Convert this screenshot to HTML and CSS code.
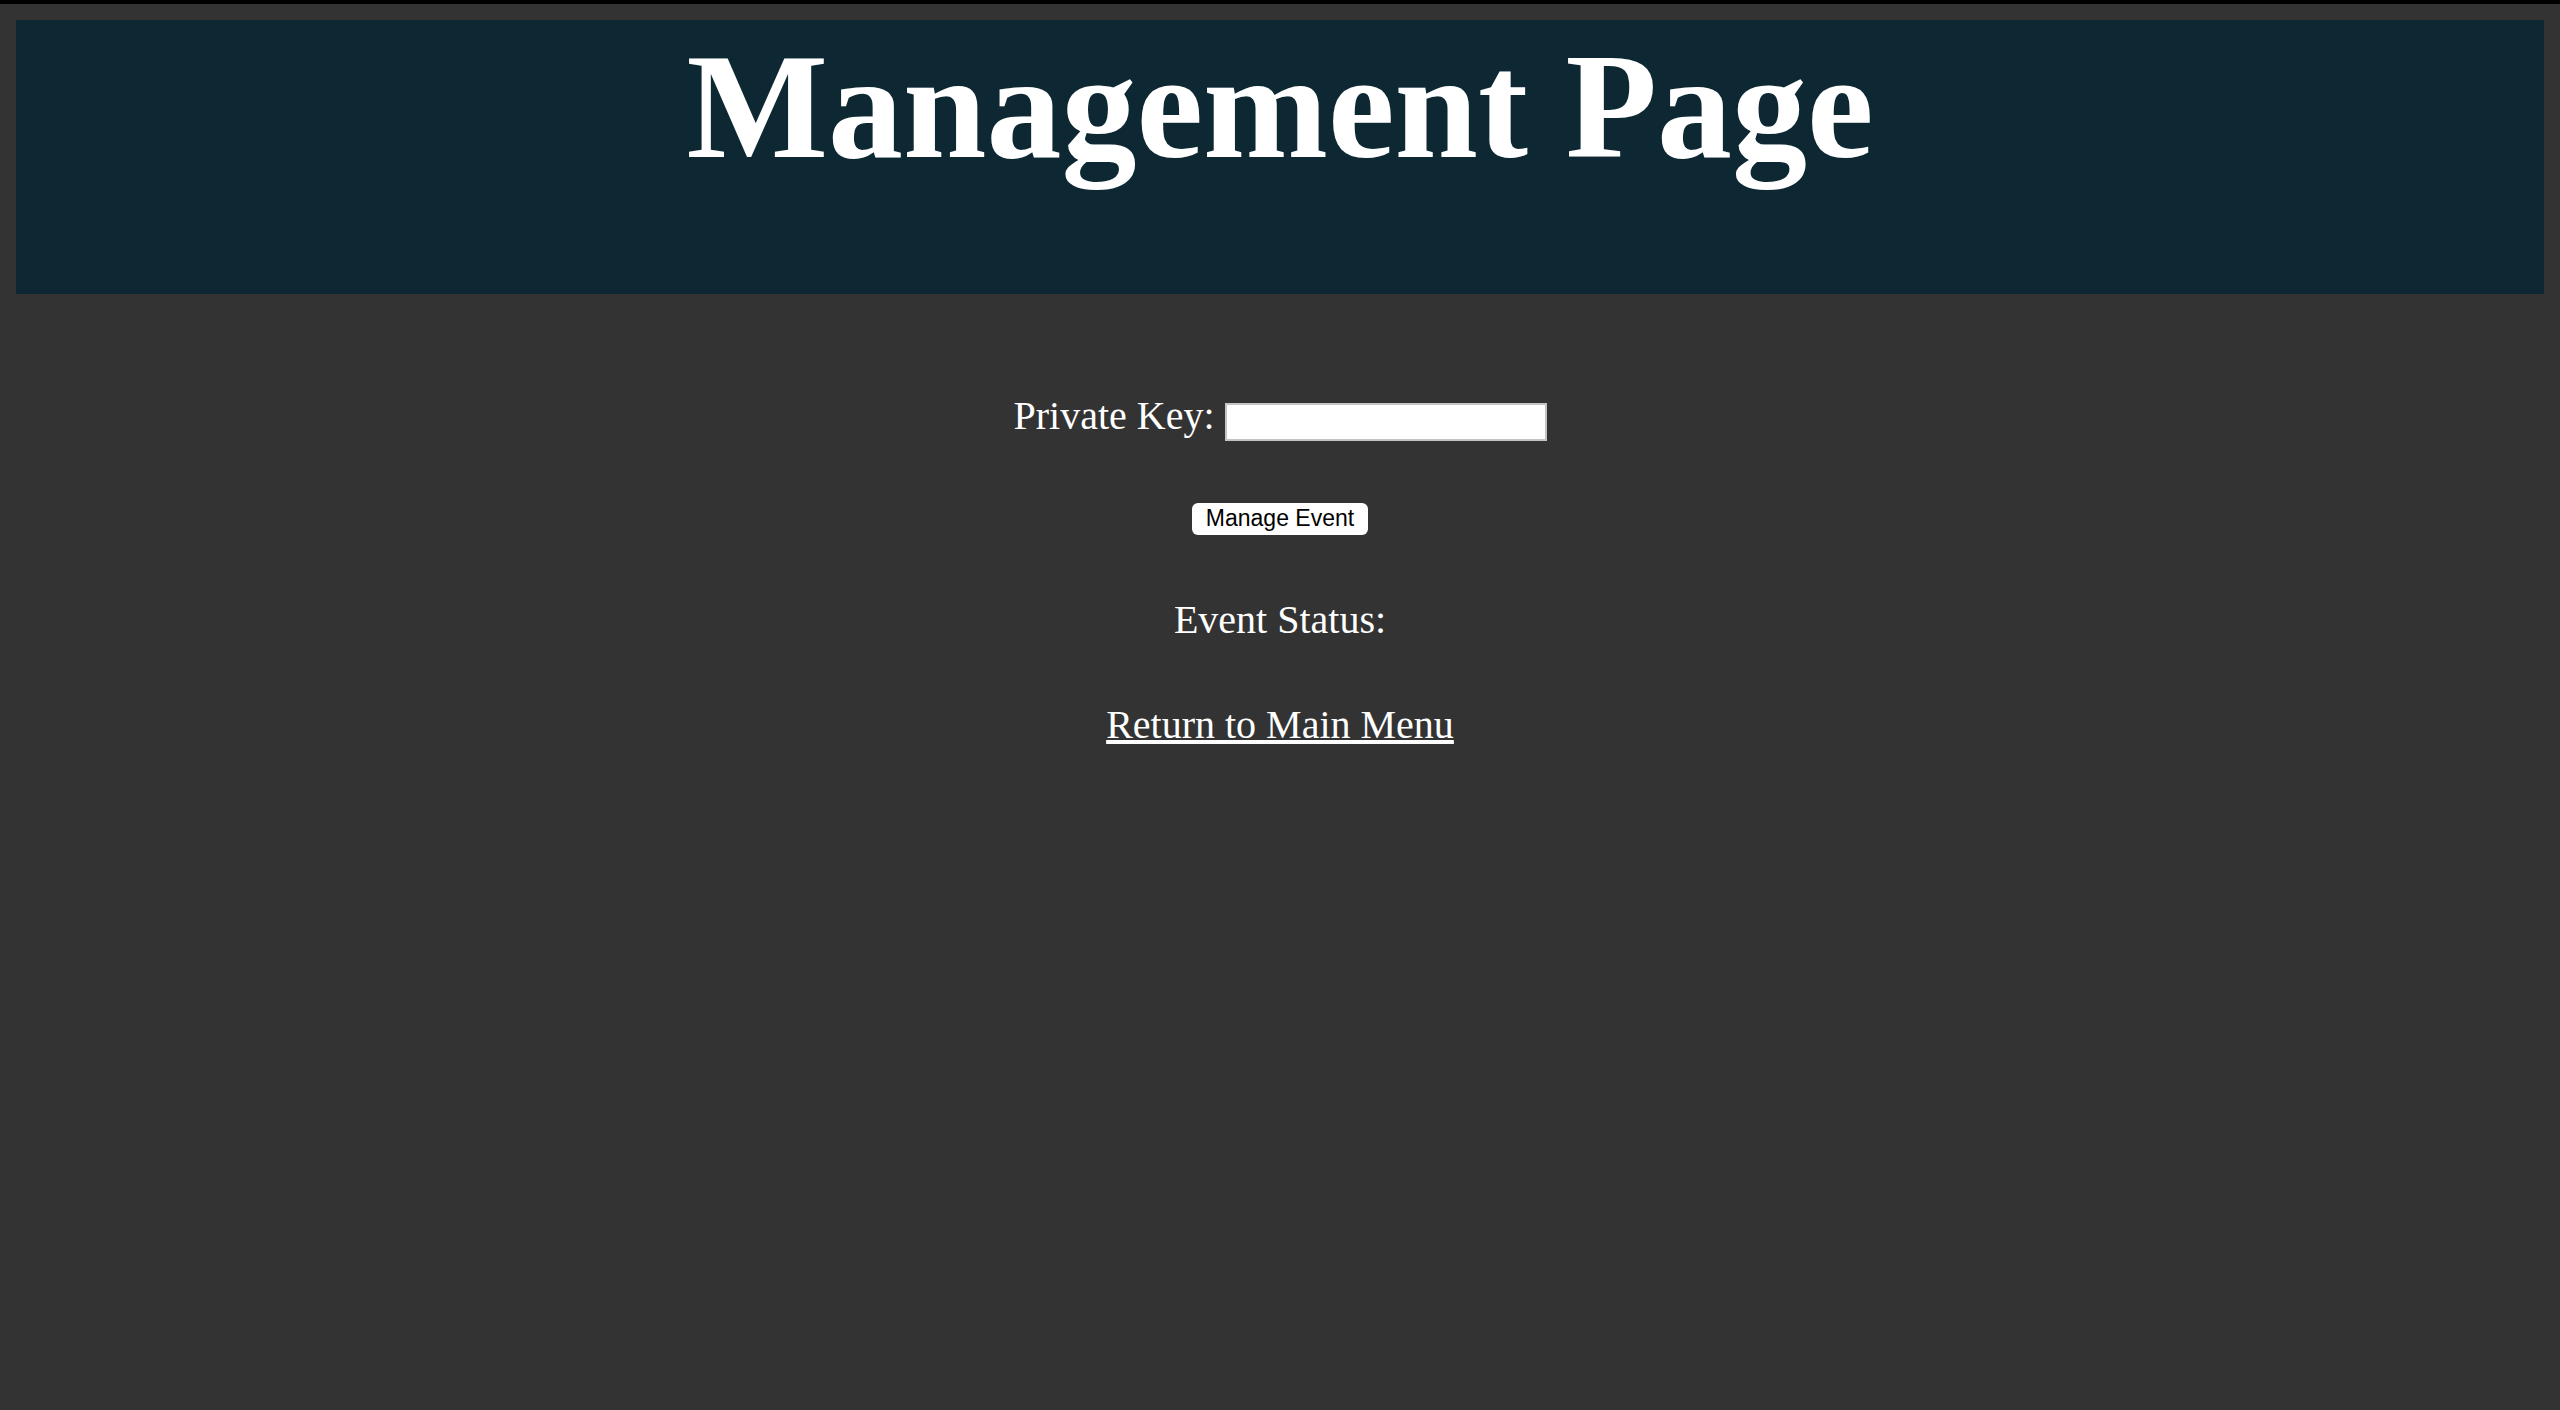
FILE: index.html
```html
<!DOCTYPE html>
<html>
<head>
<meta charset="utf-8">
<title>Management Page</title>
<link rel="stylesheet" href="styles.css">
</head>
<body>
<div class="topstrip"></div>
<div class="page">
  <header class="banner">
    <h1 class="title">Management Page</h1>
  </header>
  <main class="content">
    <p class="keyrow">Private Key: <input class="keyinput" type="text"></p>
    <button class="managebtn" type="button">Manage Event</button>
    <p class="status">Event Status:</p>
    <p class="returnrow"><a class="returnlink" href="#">Return to Main Menu</a></p>
  </main>
</div>
</body>
</html>
```

FILE: styles.css
```css
html, body {
  margin: 0;
  padding: 0;
  background: #333333;
  height: 100%;
}
body {
  font-family: "Liberation Serif", "Times New Roman", serif;
  color: #ffffff;
}
.topstrip {
  height: 4px;
  background: #000000;
}
.page {
  padding: 16px 16px 0;
}
.banner {
  background: #0d2832;
  height: 274px;
  box-sizing: border-box;
  padding-top: 0;
  text-align: center;
}
.title {
  margin: 0;
  font-size: 150px;
  font-weight: bold;
  line-height: normal;
  color: #ffffff;
}
.content {
  display: flex;
  flex-direction: column;
  align-items: center;
  padding-top: 99px;
  font-size: 40px;
}
.keyrow {
  margin: 0;
  line-height: 46px;
}
.keyinput {
  width: 322px;
  height: 38px;
  box-sizing: border-box;
  border: 2px solid #c4c4c4;
  background: #ffffff;
  padding: 0 4px;
  margin: 0;
  vertical-align: 3px;
}
.managebtn {
  margin-top: 62px;
  width: 176px;
  height: 32px;
  border: none;
  border-radius: 6px;
  background: #ffffff;
  color: #000000;
  font-family: "Liberation Sans", Arial, sans-serif;
  font-size: 23px;
  padding: 0;
}
.status {
  margin: 62px 0 0;
  line-height: 46px;
}
.returnrow {
  margin: 59px 0 0;
  line-height: 46px;
}
.returnlink {
  color: #ffffff;
  text-decoration: underline;
}
```
